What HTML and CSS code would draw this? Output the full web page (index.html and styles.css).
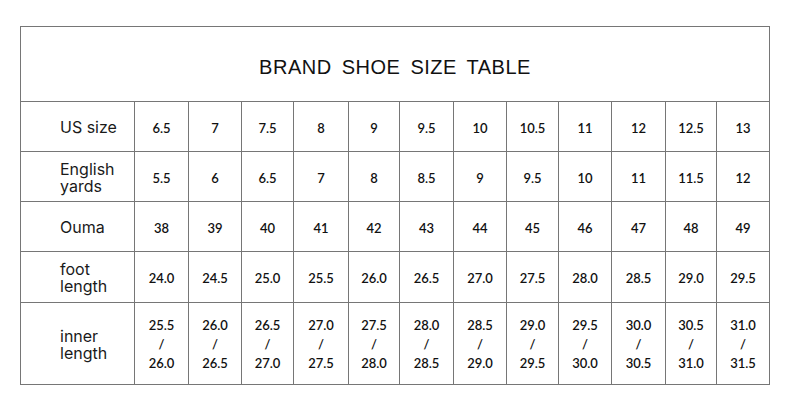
FILE: index.html
```html
<!DOCTYPE html>
<html lang="en">
<head>
<meta charset="utf-8">
<title>Brand Shoe Size Table</title>
<link rel="stylesheet" href="styles.css">
</head>
<body>
<table class="size-table">
  <colgroup>
    <col class="c-label">
    <col class="c54"><col class="c53"><col class="c52"><col class="c55"><col class="c51"><col class="c54">
    <col class="c53"><col class="c52"><col class="c53"><col class="c54"><col class="c51"><col class="c53">
  </colgroup>
  <tr class="r-title"><th colspan="13" class="title">BRAND SHOE SIZE TABLE</th></tr>
  <tr class="r-std">
    <td class="label">US size</td>
    <td>6.5</td><td>7</td><td>7.5</td><td>8</td><td>9</td><td>9.5</td><td>10</td><td>10.5</td><td>11</td><td>12</td><td>12.5</td><td>13</td>
  </tr>
  <tr class="r-std">
    <td class="label">English<br>yards</td>
    <td>5.5</td><td>6</td><td>6.5</td><td>7</td><td>8</td><td>8.5</td><td>9</td><td>9.5</td><td>10</td><td>11</td><td>11.5</td><td>12</td>
  </tr>
  <tr class="r-std">
    <td class="label">Ouma</td>
    <td>38</td><td>39</td><td>40</td><td>41</td><td>42</td><td>43</td><td>44</td><td>45</td><td>46</td><td>47</td><td>48</td><td>49</td>
  </tr>
  <tr class="r-foot">
    <td class="label">foot<br>length</td>
    <td>24.0</td><td>24.5</td><td>25.0</td><td>25.5</td><td>26.0</td><td>26.5</td><td>27.0</td><td>27.5</td><td>28.0</td><td>28.5</td><td>29.0</td><td>29.5</td>
  </tr>
  <tr class="r-inner">
    <td class="label">inner<br>length</td>
    <td>25.5<br>/<br>26.0</td><td>26.0<br>/<br>26.5</td><td>26.5<br>/<br>27.0</td><td>27.0<br>/<br>27.5</td><td>27.5<br>/<br>28.0</td><td>28.0<br>/<br>28.5</td>
    <td>28.5<br>/<br>29.0</td><td>29.0<br>/<br>29.5</td><td>29.5<br>/<br>30.0</td><td>30.0<br>/<br>30.5</td><td>30.5<br>/<br>31.0</td><td>31.0<br>/<br>31.5</td>
  </tr>
</table>
</body>
</html>
```

FILE: styles.css
```css
html, body {
  margin: 0;
  padding: 0;
  background: #ffffff;
}

.size-table {
  margin: 26px 0 0 20px;
  width: 750px;
  table-layout: fixed;
  border-collapse: collapse;
  color: #111111;
  font-family: Lato, "Open Sans", sans-serif;
}

.c-label { width: 114px; }
.c51 { width: 51px; }
.c52 { width: 52px; }
.c53 { width: 53px; }
.c54 { width: 54px; }
.c55 { width: 55px; }

.size-table th,
.size-table td {
  border: 1px solid #767676;
  padding: 0;
  text-align: center;
  vertical-align: middle;
  font-size: 13px;
  font-weight: 600;
}

.size-table th.title {
  font-family: "Liberation Sans", Arial, sans-serif;
  font-weight: 400;
  font-size: 20px;
  word-spacing: 4px;
  letter-spacing: 0.5px;
  padding-top: 6px;
}

.r-title { height: 75px; }
.r-std { height: 50px; }
.r-foot { height: 51px; }
.r-inner { height: 82px; }

.r-std td { padding-top: 3px; }
.r-foot td { padding-top: 2px; }
.r-inner td { line-height: 19px; padding-top: 2px; }

.size-table td.label {
  text-align: left;
  padding-top: 2px;
  padding-left: 39px;
  font-family: Inter, Roboto, sans-serif;
  font-weight: 400;
  font-size: 16px;
  line-height: 17px;
  color: #1a1a1a;
}
```
